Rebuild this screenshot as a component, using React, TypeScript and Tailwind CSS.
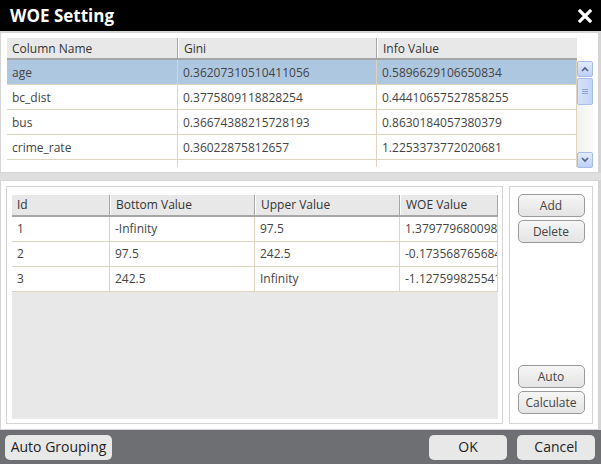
import React from "react";

const topRows = [
  ["age", "0.36207310510411056", "0.5896629106650834"],
  ["bc_dist", "0.3775809118828254", "0.44410657527858255"],
  ["bus", "0.36674388215728193", "0.8630184057380379"],
  ["crime_rate", "0.36022875812657", "1.2253373772020681"],
  ["", "", ""],
];

const lowRows = [
  ["1", "-Infinity", "97.5", "1.3797796800986"],
  ["2", "97.5", "242.5", "-0.173568765684"],
  ["3", "242.5", "Infinity", "-1.127599825541"],
];

function SmallBtn({ label }: { label: string }) {
  return (
    <button className="w-[67px] h-[23px] rounded-[5px] border border-[#9a9a9a] bg-gradient-to-b from-[#f6f6f6] to-[#e4e4e4] text-[12px] text-[#444] leading-none">
      {label}
    </button>
  );
}

function FootBtn({ label, w }: { label: string; w: string }) {
  return (
    <button className={`${w} h-[25px] rounded-[5px] bg-[#e8e8e8] text-[14px] text-[#222] leading-none`}>
      {label}
    </button>
  );
}

export default function App() {
  return (
    <div className="w-[601px] h-[464px] bg-[#dedede] flex flex-col font-['Open_Sans',sans-serif] overflow-hidden">
      {/* title */}
      <div className="h-[31px] bg-black flex items-center justify-between pl-[10px] pr-[9px] shrink-0">
        <span className="text-white font-bold text-[17px]">WOE Setting</span>
        <svg width="14" height="14" viewBox="0 0 14 14">
          <path d="M2 2 L12 12 M12 2 L2 12" stroke="white" strokeWidth="3.2" strokeLinecap="square" />
        </svg>
      </div>
      {/* top panel */}
      <div className="h-[142px] shrink-0 bg-white border-t-2 border-[#d4d4d4] border-l border-r-[3px] border-b pl-[6px] pt-[5px] flex">
        <div className="w-[570px] h-[129px] overflow-hidden flex flex-col">
          <div className="h-[22px] flex bg-[#e8e8e8] border-b-2 border-[#a6a6a6] text-[12px] text-[#333] shrink-0">
            <div className="w-[171px] pl-[5px] pt-[1px] flex items-center border-r border-[#a6a6a6]">Column Name</div>
            <div className="w-[199px] pl-[5px] pt-[1px] flex items-center border-r border-[#a6a6a6] border-l border-l-white">Gini</div>
            <div className="flex-1 pl-[5px] pt-[1px] flex items-center border-l border-l-white">Info Value</div>
          </div>
          {topRows.map((r, i) => (
            <div
              key={i}
              className={`h-[25px] shrink-0 flex text-[12px] text-[#444] border-b border-[#ddd4bf] ${i === 0 ? "bg-[#aec7e1]" : "bg-white"}`}
            >
              <div className="w-[171px] pl-[5px] pt-[1px] flex items-center border-r border-[#ddd4bf]">{r[0]}</div>
              <div className="w-[199px] pl-[5px] pt-[1px] flex items-center border-r border-[#ddd4bf]">{r[1]}</div>
              <div className="flex-1 pl-[5px] pt-[1px] flex items-center border-r border-[#ddd4bf]">{r[2]}</div>
            </div>
          ))}
        </div>
        {/* scrollbar */}
        <div className="w-[16px] h-[107px] mt-[23px] bg-gradient-to-r from-[#f1f1ee] to-[#fbfbf8] flex flex-col justify-between">
          <div className="flex flex-col gap-[1px]">
            <div className="h-[16px] rounded-[2px] border border-[#a9bde8] bg-gradient-to-b from-[#e2ebfd] to-[#bcd0f7] flex items-center justify-center">
              <svg width="8" height="6" viewBox="0 0 8 6"><path d="M1 5 L4 2 L7 5" stroke="#4d6185" strokeWidth="1.6" fill="none" /></svg>
            </div>
            <div className="h-[27px] rounded-[2px] border border-[#a9bde8] bg-gradient-to-r from-[#d6e2fb] to-[#c2d4f8] flex items-center justify-center">
              <svg width="6" height="6" viewBox="0 0 6 6"><path d="M0 0.5 H6 M0 2.5 H6 M0 4.5 H6" stroke="#8ba3d6" strokeWidth="1" /></svg>
            </div>
          </div>
          <div className="h-[16px] rounded-[2px] border border-[#a9bde8] bg-gradient-to-b from-[#e2ebfd] to-[#bcd0f7] flex items-center justify-center">
            <svg width="8" height="6" viewBox="0 0 8 6"><path d="M1 1 L4 4 L7 1" stroke="#4d6185" strokeWidth="1.6" fill="none" /></svg>
          </div>
        </div>
      </div>
      <div className="h-[7px] shrink-0" />
      {/* lower panel */}
      <div className="h-[250px] shrink-0 bg-white border border-[#d4d4d4] border-r-[3px] p-[5px] flex gap-[6px]">
        <div className="w-[497px] border border-[#d4d4d4] pl-[5px] pt-[8px] pr-[4px] pb-[4px] flex">
          <div className="w-[486px] h-full bg-[#e8e8e8] overflow-hidden flex flex-col">
            <div className="h-[22px] flex bg-[#e8e8e8] border-b-2 border-[#a6a6a6] text-[12px] text-[#333] shrink-0">
              <div className="w-[98px] pl-[5px] flex items-center border-r border-[#a6a6a6]">Id</div>
              <div className="w-[145px] pl-[5px] flex items-center border-r border-[#a6a6a6] border-l border-l-white">Bottom Value</div>
              <div className="w-[145px] pl-[5px] flex items-center border-r border-[#a6a6a6] border-l border-l-white">Upper Value</div>
              <div className="flex-1 pl-[5px] flex items-center border-l border-l-white border-r border-r-[#a6a6a6]">WOE Value</div>
            </div>
            {lowRows.map((r, i) => (
              <div key={i} className="h-[25px] shrink-0 flex text-[12px] text-[#444] bg-white border-b border-[#ddd4bf]">
                <div className="w-[98px] pl-[5px] flex items-center border-r border-[#ddd4bf]">{r[0]}</div>
                <div className="w-[145px] pl-[5px] flex items-center border-r border-[#ddd4bf]">{r[1]}</div>
                <div className="w-[145px] pl-[5px] flex items-center border-r border-[#ddd4bf]">{r[2]}</div>
                <div className="flex-1 pl-[5px] flex items-center border-r border-[#ddd4bf] overflow-hidden whitespace-nowrap">{r[3]}</div>
              </div>
            ))}
          </div>
        </div>
        <div className="flex-1 border border-[#d4d4d4] flex flex-col justify-between items-center pt-[7px] pb-[9px]">
          <div className="flex flex-col gap-[3px]">
            <SmallBtn label="Add" />
            <SmallBtn label="Delete" />
          </div>
          <div className="flex flex-col gap-[3px]">
            <SmallBtn label="Auto" />
            <SmallBtn label="Calculate" />
          </div>
        </div>
      </div>
      {/* footer */}
      <div className="flex-1 bg-[#6e6f73] flex items-center justify-between pl-[5px] pr-[6px]">
        <FootBtn label="Auto Grouping" w="w-[107px]" />
        <div className="flex gap-[10px]">
          <FootBtn label="OK" w="w-[78px]" />
          <FootBtn label="Cancel" w="w-[78px]" />
        </div>
      </div>
    </div>
  );
}
